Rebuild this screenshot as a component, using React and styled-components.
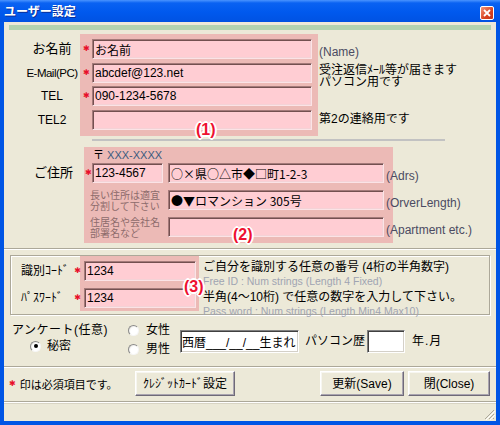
import React from 'react';
import styled, { createGlobalStyle } from 'styled-components';

const GlobalStyle = createGlobalStyle`
  html, body {
    margin: 0;
    padding: 0;
    background: #fff;
  }
  body {
    font-family: "Liberation Sans", "Noto Sans CJK JP", sans-serif;
    font-size: 12px;
    color: #000;
  }
`;

const pink = '#ecbab6';
const fieldPink = '#ffcdd3';

const Window = styled.div`
  width: 500px;
  height: 425px;
  display: flex;
  flex-direction: column;
  background: #0055e5;
  overflow: hidden;
`;

const TitleBar = styled.div`
  height: 22px;
  flex: none;
  display: flex;
  align-items: flex-start;
  justify-content: space-between;
  padding: 0 6px 0 4px;
  background: linear-gradient(#4a94ff 0, #0a62f2 3px, #0059ee 12px, #0052e2 22px);
`;

const Title = styled.span`
  margin-top: 4px;
  color: #fff;
  font: bold 12px/14px "Noto Sans CJK JP", sans-serif;
  text-shadow: 1px 1px 0 #0a2f9a;
`;

const CloseBox = styled.span`
  margin-top: 6px;
  width: 14px;
  height: 14px;
  box-sizing: border-box;
  border: 1px solid #fff;
  border-radius: 2px;
  background: linear-gradient(135deg, #f3957a, #d8421f 60%, #c1341a);
  display: flex;
  align-items: center;
  justify-content: center;
`;

const Client = styled.div`
  flex: 1;
  display: flex;
  flex-direction: column;
  margin: 0 4px 4px;
  background: #ece9d8;
`;

const GreenBar = styled.div`
  flex: none;
  height: 5px;
  margin: 3px 5px 0;
  background: #b2d3b0;
`;

/* ---------- section (1) ---------- */

const NameSection = styled.div`
  flex: none;
  display: grid;
  grid-template-columns: 76px 238px 1fr;
  height: 102px;
  margin-top: 4px;
`;

const LabelStack = styled.div`
  display: grid;
  grid-template-rows: repeat(4, 20px);
  row-gap: 3.5px;
  padding: 5px 0 0 20px;
  justify-items: center;
  align-items: center;
`;

const FieldLabel = styled.span`
  font-size: ${p => (p.$tight ? 11.5 : p.$latin ? 12 : 13)}px;
  letter-spacing: ${p => (p.$tight ? '-0.5px' : '0')};
  line-height: 16px;
  white-space: nowrap;
`;

const NameFields = styled.div`
  position: relative;
  background: ${pink};
  display: grid;
  grid-template-columns: 9px 1fr;
  grid-template-rows: repeat(4, 20px);
  row-gap: 3.5px;
  padding: 5px 6px 0 3px;
  align-items: center;
`;

const NoteStack = styled.div`
  display: grid;
  grid-template-rows: repeat(4, 20px);
  row-gap: 3.5px;
  padding: 5px 0 0 1px;
`;

const Note = styled.span`
  align-self: ${p => p.$align || 'center'};
  padding-top: ${p => p.$pad || 0}px;
  font-size: 12px;
  line-height: ${p => p.$lh || 13}px;
  color: ${p => (p.$hint ? '#4b4b62' : '#000')};
  white-space: nowrap;
`;

const Star = styled.span`
  color: #e8102a;
  font-family: "DejaVu Sans", sans-serif;
  font-size: 8px;
  line-height: 8px;
  align-self: center;
  justify-self: ${p => p.$justify || 'start'};
`;

const PinkField = styled.input`
  box-sizing: border-box;
  width: 100%;
  height: 20px;
  margin: 0;
  padding: 0 2px;
  font: 12px/16px ${p => (p.$cjk ? '"Noto Sans CJK JP", sans-serif' : '"Liberation Sans", "Noto Sans CJK JP", sans-serif')};
  color: #000;
  background: ${fieldPink};
  border: 1px solid;
  border-color: #a47a7a #fbe3e6 #fbe3e6 #a47a7a;
  box-shadow: inset 1px 1px 0 #735050, inset -1px -1px 0 #f4d2d6;
  outline: none;
`;

const Badge = styled.span`
  position: absolute;
  left: ${p => p.$x}px;
  top: ${p => p.$y}px;
  z-index: 2;
  font: bold 16px/16px "Liberation Sans", sans-serif;
  color: #ee1030;
  text-shadow:
    -1px -1px 0 #fff, 1px -1px 0 #fff, -1px 1px 0 #fff, 1px 1px 0 #fff,
    0 -2px 0 #fff, 0 2px 0 #fff, -2px 0 0 #fff, 2px 0 0 #fff;
`;

const GreyRule = styled.div`
  flex: none;
  height: 2px;
  margin: 3px 51px 0 88px;
  background: #c2c2c2;
`;

/* ---------- section (2) ---------- */

const AddressSection = styled.div`
  position: relative;
  flex: none;
  display: grid;
  grid-template-columns: 80px 8px 71px 5px 216px 9px 1fr;
  grid-template-rows: 3px 11px 2px 20px 7px 20px 7px 20px 6px;
  margin-top: 6px;
`;

const AddressBack = styled.div`
  grid-row: 1 / -1;
  grid-column: 2 / 7;
  background: ${pink};
`;

const AddressLabel = styled.span`
  grid-row: 4;
  grid-column: 1;
  justify-self: end;
  align-self: center;
  padding-right: 11px;
  font-size: 13px;
  line-height: 16px;
`;

const AddressStar = styled(Star)`
  grid-row: 4;
  grid-column: 2;
  padding-left: 1px;
`;

const ZipCaption = styled.span`
  grid-row: 2;
  grid-column: 3 / 6;
  padding-left: 1px;
  font-size: 11px;
  line-height: 11px;
  white-space: nowrap;
  & b {
    font-weight: normal;
    color: #3b5b7e;
  }
`;

const ZipCell = styled.div`
  grid-row: 4;
  grid-column: 3;
`;

const AddrCell = styled.div`
  grid-row: ${p => p.$row};
  grid-column: 5;
`;

const GreyHint = styled.span`
  grid-row: ${p => p.$row};
  grid-column: 2 / 5;
  align-self: center;
  padding-left: 6px;
  font: 10px/11.5px "Noto Sans CJK JP", sans-serif;
  color: #8c6b6b;
  white-space: nowrap;
`;

const AddrNote = styled(Note)`
  grid-row: ${p => p.$row};
  grid-column: 6 / 8;
  align-self: end;
  padding-left: 2px;
  color: #4b4b62;
`;

const Etched = styled.div`
  flex: none;
  height: 2px;
  box-sizing: border-box;
  margin-top: ${p => p.$gap || 0}px;
  border-top: 1px solid #aca899;
  border-bottom: 1px solid #fff;
`;

/* ---------- section (3) ---------- */

const IdGroup = styled.div`
  position: relative;
  flex: none;
  margin: 5px 6px 0;
  height: 60px;
  box-sizing: border-box;
  border: 1px solid #aca899;
  box-shadow: inset 1px 1px 0 #fff, 1px 1px 0 #fff;
  display: grid;
  grid-template-columns: 62px 7px 4px 112px 3px 4px 1fr;
  grid-template-rows: 5px 20px 7px 20px 3px 3px;
`;

const IdBack = styled.div`
  grid-row: 1 / 6;
  grid-column: 3 / 6;
  background: ${pink};
`;

const IdLabel = styled.span`
  grid-row: ${p => p.$row};
  grid-column: 1;
  align-self: center;
  padding-left: 10px;
  font-size: 12px;
  line-height: 16px;
  white-space: nowrap;
`;

const IdStar = styled(Star)`
  grid-row: ${p => p.$row};
  grid-column: 2;
  justify-self: end;
  margin-right: -1px;
`;

const IdCell = styled.div`
  grid-row: ${p => p.$row};
  grid-column: 4;
`;

const IdHelp = styled.div`
  grid-row: 1 / -1;
  grid-column: 7;
  display: flex;
  flex-direction: column;
  padding-top: 4.5px;
  white-space: nowrap;
`;

const HelpMain = styled.span`
  font-size: 12px;
  line-height: 13px;
  margin-top: ${p => (p.$next ? 4 : 0)}px;
`;

const HelpSub = styled.span`
  margin-top: 2px;
  font: 10.5px/11px "Liberation Sans", sans-serif;
  color: #a0a4b2;
`;

/* ---------- survey ---------- */

const Survey = styled.div`
  flex: none;
  height: 51px;
  display: flex;
  align-items: flex-start;
  padding-left: 8px;
`;

const SurveyLead = styled.div`
  width: 116px;
  flex: none;
  padding-top: 8px;
  display: flex;
  flex-direction: column;
  gap: 2px;
`;

const SurveyTitle = styled.span`
  font-size: 12px;
  line-height: 14px;
  letter-spacing: 0.5px;
`;

const SexChoice = styled.div`
  width: 52px;
  flex: none;
  padding-top: 8px;
  display: flex;
  flex-direction: column;
  gap: 5px;
`;

const RadioOption = styled.label`
  display: flex;
  align-items: center;
  gap: ${p => (p.$wide ? 7 : 6)}px;
  margin-left: ${p => p.$indent || 0}px;
  font-size: 12px;
  line-height: 14px;
`;

const RadioDot = styled.span`
  width: 11px;
  height: 11px;
  flex: none;
  box-sizing: border-box;
  border-radius: 50%;
  border: 1px solid;
  border-color: #8b8b8b #f6f6f6 #f6f6f6 #8b8b8b;
  background: radial-gradient(circle at 62% 62%, #ffffff 0 50%, #d6d3cc 100%);
  display: flex;
  align-items: center;
  justify-content: center;
  &::after {
    content: '';
    width: 4px;
    height: 4px;
    border-radius: 50%;
    background: ${p => (p.$checked ? '#000' : 'transparent')};
  }
`;

const WhiteField = styled.input`
  box-sizing: border-box;
  flex: none;
  width: ${p => p.$w}px;
  height: 23px;
  margin: 15px 0 0 ${p => p.$ml || 0}px;
  padding: 0 1px;
  font: 12px/17px "Liberation Sans", "Noto Sans CJK JP", sans-serif;
  color: #000;
  background: #fff;
  border: 1px solid;
  border-color: #7f7f7f #fff #fff #7f7f7f;
  box-shadow: inset 1px 1px 0 #404040, inset -1px -1px 0 #d4d0c8;
  outline: none;
`;

const InlineText = styled.span`
  flex: none;
  margin: 15px 0 0 ${p => p.$ml || 0}px;
  font-size: 12px;
  line-height: 23px;
  letter-spacing: ${p => p.$ls || 0}px;
  white-space: nowrap;
`;

/* ---------- action bar ---------- */

const ActionBar = styled.div`
  flex: none;
  height: 33px;
  box-sizing: border-box;
  display: flex;
  align-items: flex-start;
  padding: 3px 6px 0 5px;
  gap: 4px;
`;

const Required = styled.div`
  width: 122px;
  flex: none;
  height: 25px;
  display: flex;
  align-items: center;
  gap: 4px;
  font-size: 11px;
  white-space: nowrap;
`;

const Spacer = styled.div`
  flex: 1;
`;

const Button = styled.button`
  box-sizing: border-box;
  width: ${p => p.$w}px;
  height: 25px;
  margin: 0;
  padding: 0;
  font: 12px/16px "Liberation Sans", "Noto Sans CJK JP", sans-serif;
  color: #000;
  background: #ece9d8;
  border: 1px solid;
  border-color: #fff #6f6a78 #6f6a78 #fff;
  box-shadow: inset -1px -1px 0 #a9a4b0, inset 1px 1px 0 #f7f6f0;
  white-space: nowrap;
`;

const StatusBar = styled.div`
  flex: 1;
  display: flex;
  justify-content: flex-end;
  align-items: flex-end;
  border-top: 1px solid #d8d4c4;
  padding: 0 1px 1px 0;
`;

const CloseIcon = () => (
  <svg width="8" height="8" viewBox="0 0 8 8">
    <path d="M1 1 L7 7 M7 1 L1 7" stroke="#fff" strokeWidth="1.8" />
  </svg>
);

const Grip = () => (
  <svg width="12" height="12" viewBox="0 0 12 12">
    <path d="M11 2 L2 11 M11 6 L6 11 M11 10 L10 11" stroke="#aca899" strokeWidth="1" />
    <path d="M12 3 L3 12 M12 7 L7 12" stroke="#fff" strokeWidth="1" />
  </svg>
);

const nameRows = [
  { label: 'お名前', value: 'お名前', required: true },
  { label: 'E-Mail(PC)', value: 'abcdef@123.net', required: true, latin: true, tight: true },
  { label: 'TEL', value: '090-1234-5678', required: true, latin: true },
  { label: 'TEL2', value: '', latin: true },
];

const App = () => (
  <>
    <GlobalStyle />
    <Window>
      <TitleBar>
        <Title>ユーザー設定</Title>
        <CloseBox><CloseIcon /></CloseBox>
      </TitleBar>
      <Client>
        <GreenBar />

        <NameSection>
          <LabelStack>
            {nameRows.map(r => (
              <FieldLabel key={r.label} $latin={r.latin} $tight={r.tight}>{r.label}</FieldLabel>
            ))}
          </LabelStack>
          <NameFields>
            {nameRows.map(r => (
              <React.Fragment key={r.label}>
                <Star>{r.required ? '✱' : ''}</Star>
                <PinkField readOnly defaultValue={r.value} />
              </React.Fragment>
            ))}
            <Badge $x={116} $y={88}>(1)</Badge>
          </NameFields>
          <NoteStack>
            <Note $hint $align="end">(Name)</Note>
            <Note $align="start" $pad={1} $lh={12}>受注返信ﾒｰﾙ等が届きます<br />パソコン用です</Note>
            <span />
            <Note>第2の連絡用です</Note>
          </NoteStack>
        </NameSection>

        <GreyRule />

        <AddressSection>
          <AddressBack />
          <ZipCaption>〒 <b>XXX-XXXX</b></ZipCaption>
          <AddressLabel>ご住所</AddressLabel>
          <AddressStar>✱</AddressStar>
          <ZipCell><PinkField readOnly defaultValue="123-4567" /></ZipCell>
          <AddrCell $row={4}><PinkField $cjk readOnly defaultValue="○×県○△市◆□町1-2-3" /></AddrCell>
          <AddrNote $row={4}>(Adrs)</AddrNote>
          <GreyHint $row={6}>長い住所は適宜<br />分割して下さい</GreyHint>
          <AddrCell $row={6}><PinkField $cjk readOnly defaultValue="●▼ロマンション 305号" /></AddrCell>
          <AddrNote $row={6}>(OrverLength)</AddrNote>
          <GreyHint $row={8}>住居名や会社名<br />部署名など</GreyHint>
          <AddrCell $row={8}><PinkField readOnly defaultValue="" /></AddrCell>
          <AddrNote $row={8}>(Apartment etc.)</AddrNote>
          <Badge $x={229} $y={80}>(2)</Badge>
        </AddressSection>

        <Etched $gap={5} />

        <IdGroup>
          <IdBack />
          <IdLabel $row={2}>識別ｺｰﾄﾞ</IdLabel>
          <IdStar $row={2}>✱</IdStar>
          <IdCell $row={2}><PinkField readOnly defaultValue="1234" /></IdCell>
          <IdLabel $row={4}>ﾊﾟｽﾜｰﾄﾞ</IdLabel>
          <IdStar $row={4}>✱</IdStar>
          <IdCell $row={4}><PinkField readOnly defaultValue="1234" /></IdCell>
          <IdHelp>
            <HelpMain>ご自分を識別する任意の番号 (4桁の半角数字)</HelpMain>
            <HelpSub>Free ID : Num strings (Length 4 Fixed)</HelpSub>
            <HelpMain $next>半角(4～10桁) で任意の数字を入力して下さい。</HelpMain>
            <HelpSub>Pass word : Num strings (Length Min4 Max10)</HelpSub>
          </IdHelp>
          <Badge $x={173} $y={23}>(3)</Badge>
        </IdGroup>

        <Survey>
          <SurveyLead>
            <SurveyTitle>アンケート(任意)</SurveyTitle>
            <RadioOption $indent={18}><RadioDot $checked />秘密</RadioOption>
          </SurveyLead>
          <SexChoice>
            <RadioOption $wide><RadioDot />女性</RadioOption>
            <RadioOption $wide><RadioDot />男性</RadioOption>
          </SexChoice>
          <WhiteField $w={119} readOnly defaultValue="西暦___/__/__生まれ" />
          <InlineText $ml={6}>パソコン歴</InlineText>
          <WhiteField $w={38} $ml={2} readOnly defaultValue="" />
          <InlineText $ml={7} $ls={1}>年.月</InlineText>
        </Survey>

        <Etched />

        <ActionBar>
          <Required><Star>✱</Star>印は必須項目です。</Required>
          <Button $w={100}>ｸﾚｼﾞｯﾄｶｰﾄﾞ設定</Button>
          <Spacer />
          <Button $w={84}>更新(Save)</Button>
          <Button $w={82}>閉(Close)</Button>
        </ActionBar>

        <Etched />

        <StatusBar>
          <Grip />
        </StatusBar>
      </Client>
    </Window>
  </>
);

export default App;
